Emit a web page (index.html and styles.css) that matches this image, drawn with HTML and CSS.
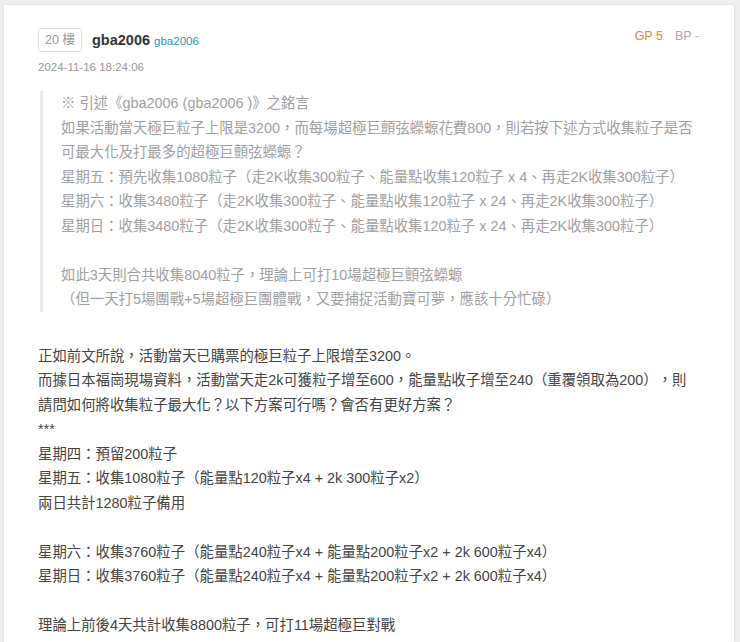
FILE: index.html
```html
<!DOCTYPE html>
<html lang="zh-Hant">
<head>
    <meta charset="UTF-8">
    <title>gba2006 - 20 樓</title>
    <link rel="stylesheet" href="styles.css">
</head>
<body>
    <article class="post">
        <div class="post-header">
            <div class="author">
                <span class="floor">20 樓</span>
                <span class="nick">gba2006</span>
                <span class="userid">gba2006</span>
            </div>
            <div class="score">
                <span class="gp">GP 5</span>
                <span class="bp">BP -</span>
            </div>
        </div>
        <div class="post-date">2024-11-16 18:24:06</div>

        <blockquote class="quote">
            ※ 引述《gba2006 (gba2006 )》之銘言<br>
            如果活動當天極巨粒子上限是3200，而每場超極巨顫弦蠑螈花費800，則若按下述方式收集粒子是否可最大化及打最多的超極巨顫弦蠑螈？<br>
            星期五：預先收集1080粒子（走2K收集300粒子、能量點收集120粒子 x 4、再走2K收集300粒子）<br>
            星期六：收集3480粒子（走2K收集300粒子、能量點收集120粒子 x 24、再走2K收集300粒子）<br>
            星期日：收集3480粒子（走2K收集300粒子、能量點收集120粒子 x 24、再走2K收集300粒子）<br>
            <br>
            如此3天則合共收集8040粒子，理論上可打10場超極巨顫弦蠑螈<br>
            （但一天打5場團戰+5場超極巨團體戰，又要捕捉活動寶可夢，應該十分忙碌）
        </blockquote>

        <div class="post-body">
            正如前文所說，活動當天已購票的極巨粒子上限增至3200。<br>
            而據日本福崗現場資料，活動當天走2k可獲粒子增至600，能量點收子增至240（重覆領取為200），則請問如何將收集粒子最大化？以下方案可行嗎？會否有更好方案？<br>
            ***<br>
            星期四：預留200粒子<br>
            星期五：收集1080粒子（能量點120粒子x4 + 2k 300粒子x2）<br>
            兩日共計1280粒子備用<br>
            <br>
            星期六：收集3760粒子（能量點240粒子x4 + 能量點200粒子x2 + 2k 600粒子x4）<br>
            星期日：收集3760粒子（能量點240粒子x4 + 能量點200粒子x2 + 2k 600粒子x4）<br>
            <br>
            理論上前後4天共計收集8800粒子，可打11場超極巨對戰
        </div>
    </article>
</body>
</html>
```

FILE: styles.css
```css
body {
    margin: 0;
    padding: 5px 6px 0 4px;
    background-color: #eeeeee;
    font-family: "Liberation Sans", "Noto Sans CJK TC", sans-serif;
    color: #444;
    text-spacing-trim: space-all;
}
.post {
    background-color: #fff;
    box-shadow: 0 0 2px rgba(0, 0, 0, 0.12);
    padding: 23px 35px 0 34px;
    height: 637px;
    box-sizing: border-box;
    overflow: hidden;
}
.post-header {
    display: flex;
    justify-content: space-between;
    align-items: flex-start;
}
.author {
    display: flex;
    align-items: center;
}
.floor {
    box-sizing: border-box;
    width: 44px;
    height: 24px;
    line-height: 22px;
    border: 1px solid #ddd;
    border-radius: 3px;
    text-align: center;
    font-size: 12.5px;
    color: #999;
}
.nick {
    margin-left: 10px;
    font-size: 14.5px;
    font-weight: bold;
    color: #333;
}
.userid {
    margin-left: 4px;
    margin-top: 2px;
    font-size: 11.5px;
    color: #2c98a8;
}
.score {
    display: flex;
    gap: 12px;
    margin-top: 1px;
    font-size: 12.5px;
    line-height: 15px;
}
.gp { color: #e8843c; }
.bp { color: #aaa; }
.post-date {
    margin-top: 8px;
    font-size: 11.5px;
    line-height: 14px;
    color: #999;
}
.quote {
    margin: 17px 0 0 2px;
    padding-left: 18px;
    border-left: 3px solid #e8e8e8;
    font-size: 14.4px;
    line-height: 24.5px;
    color: #a0a0a0;
}
.post-body {
    margin-top: 32px;
    font-size: 14.4px;
    line-height: 24.5px;
    color: #444;
}
```
